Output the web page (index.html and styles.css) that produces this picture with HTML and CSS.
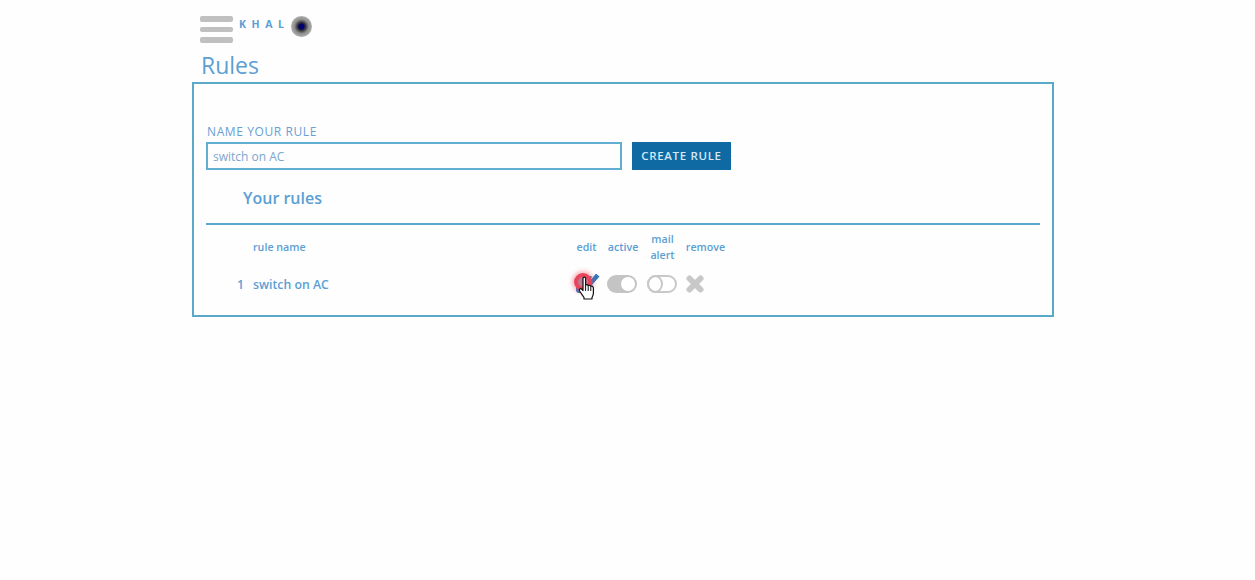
FILE: index.html
```html
<!DOCTYPE html>
<html>
<head>
    <link rel="stylesheet" href="styles.css">
</head>
<body>
    <div class="wrapper">
        <!-- Top bar -->
        <div class="topbar">
            <div class="burger"><span></span><span></span><span></span></div>
            <div class="brand">KHAL</div>
            <div class="eye"></div>
        </div>
        <h1 class="title">Rules</h1>
        <!-- Rules panel -->
        <div class="panel">
            <label class="name-label">NAME YOUR RULE</label>
            <div class="create-row">
                <div class="name-input">switch on AC</div>
                <button class="create-btn">CREATE RULE</button>
            </div>
            <h2 class="subtitle">Your rules</h2>
            <div class="rules-head">
                <div></div>
                <div class="col-name">rule name</div>
                <div class="col">edit</div>
                <div class="col">active</div>
                <div class="col">mail<br>alert</div>
                <div class="col">remove</div>
            </div>
            <div class="rule-row">
                <div class="num">1</div>
                <div class="col-name">switch on AC</div>
                <div class="edit-cell">
                    <svg class="pencil" width="28" height="28" viewBox="0 0 28 28">
                        <rect x="3" y="7" width="17" height="17" rx="3" fill="#3b7fc0"/>
                        <path d="M12 17 L23 4 L27 7.5 L16 20 L11.5 21.5 Z" fill="#2f78bd" stroke="#fff" stroke-width="1"/>
                    </svg>
                    <div class="click-glow"></div>
                    <svg class="hand" width="18" height="24" viewBox="0 0 18 24">
                        <path d="M5 2.2 C5 .7 7.6 .7 7.6 2.2 L7.6 9 C8.6 8.4 9.8 8.6 10.2 9.5 C11.2 9 12.4 9.3 12.8 10.3 C14 9.9 15.4 10.6 15.4 12 L15.4 17 C15.4 19 14.6 20 14 21.5 L14 23 L6 23 L6 21.5 C4.5 19.5 3.4 17.5 1.6 15 C.6 13.4 2.4 12 3.8 13.2 L5 14.6 Z" fill="#fff" stroke="#111" stroke-width="1.2" stroke-linejoin="round"/>
                        <path d="M7.6 9 L7.6 15 M10.2 9.5 L10.2 15 M12.8 10.3 L12.8 15" stroke="#111" stroke-width="1" fill="none"/>
                    </svg>
                </div>
                <div class="toggle-cell"><div class="toggle on"><span></span></div></div>
                <div class="toggle-cell"><div class="toggle off"><span></span></div></div>
                <div class="remove-cell">
                    <svg width="20" height="20" viewBox="0 0 20 20">
                        <path d="M4.5 4.5 L15.5 15.5 M15.5 4.5 L4.5 15.5" stroke="#c8c8c8" stroke-width="6" stroke-linecap="round"/>
                    </svg>
                </div>
            </div>
        </div>
    </div>
</body>
</html>
```

FILE: styles.css
```css
body {
    margin: 0;
    background: #fefefe;
    font-family: "Open Sans", sans-serif;
    color: #5b9fd4;
}
.wrapper {
    width: 862px;
    margin-left: 192px;
    padding-top: 15px;
}
/* Top bar */
.topbar {
    display: flex;
    align-items: flex-start;
    height: 29px;
    padding-left: 8px;
}
.burger {
    width: 33px;
    display: flex;
    flex-direction: column;
    gap: 5px;
    padding-top: 1px;
}
.burger span {
    display: block;
    height: 5.5px;
    background: #c0c0c0;
    border-radius: 2px;
}
.brand {
    margin-left: 6px;
    width: 52px;
    font-size: 10.5px;
    font-weight: 700;
    letter-spacing: 5.6px;
    line-height: 18px;
}
.eye {
    width: 21px;
    height: 21px;
    margin-top: 1px;
    border-radius: 50%;
    background: radial-gradient(circle, #00007a 0, #00006a 16%, #3a3a3a 28%, #8f8f8f 48%, #b5b5b5 75%, #e8e8e8 100%);
}
.title {
    margin: 4px 0 0 9px;
    font-size: 23px;
    font-weight: 400;
    line-height: 34px;
    color: #5b9fd4;
}
/* Panel */
.panel {
    box-sizing: border-box;
    height: 235px;
    border: 2px solid #5aa9c9;
    padding: 39px 12px 0 12px;
}
.name-label {
    display: block;
    margin-left: 1px;
    font-size: 12px;
    line-height: 17px;
    letter-spacing: 0.6px;
    color: #6a9fd2;
}
.create-row {
    display: flex;
    gap: 10px;
    margin-top: 2px;
}
.name-input {
    box-sizing: border-box;
    width: 416px;
    height: 28px;
    border: 2px solid #62aed2;
    padding-left: 5px;
    font-size: 12px;
    line-height: 25px;
    color: #7ba6cf;
}
.create-btn {
    width: 99px;
    height: 28px;
    border: none;
    padding: 0 0 1px;
    background: #0f69a3;
    color: #d5e8f4;
    font-family: inherit;
    font-size: 11.5px;
    font-weight: 600;
    letter-spacing: 0.65px;
}
.subtitle {
    box-sizing: border-box;
    height: 55px;
    margin: 0;
    padding: 17px 0 0 37px;
    border-bottom: 2px solid #5aa9c9;
    font-size: 16px;
    font-weight: 600;
    line-height: 22px;
    color: #5b9fd4;
}
/* Rule table */
.rules-head, .rule-row {
    display: grid;
    grid-template-columns: 38px 328px 29px 44px 35px 51px;
    align-items: center;
    font-size: 10.7px;
    font-weight: 600;
}
.rules-head {
    height: 43px;
    line-height: 16px;
}
.rules-head .col {
    text-align: center;
}
.col-name {
    padding-left: 9px;
}
.rule-row {
    height: 32px;
    font-size: 12.3px;
}
.num {
    text-align: right;
}
.edit-cell {
    position: relative;
    height: 28px;
}
.pencil {
    position: absolute;
    left: 1px;
    top: -1px;
}
.click-glow {
    position: absolute;
    left: 2px;
    top: 3px;
    width: 18px;
    height: 18px;
    border-radius: 50%;
    box-sizing: border-box;
    border: 4px solid #e8445a;
    background: #c07a95;
    box-shadow: 0 0 4px 2px rgba(240, 70, 90, 0.4);
}
.hand {
    position: absolute;
    left: 6px;
    top: 6px;
}
.toggle-cell {
    display: flex;
    justify-content: center;
    padding-right: 2px;
}
.toggle {
    box-sizing: border-box;
    width: 30px;
    height: 18px;
    border-radius: 9px;
    display: flex;
    align-items: center;
}
.toggle span {
    display: block;
    border-radius: 50%;
}
.toggle.on {
    background: #c4c4c4;
    justify-content: flex-end;
    padding-right: 2px;
}
.toggle.on span {
    width: 14px;
    height: 14px;
    background: #fff;
}
.toggle.off {
    border: 2px solid #c8c8c8;
    background: #fff;
}
.toggle.off span {
    box-sizing: border-box;
    width: 16px;
    height: 18px;
    margin-left: -2px;
    border: 2px solid #c8c8c8;
}
.remove-cell {
    padding-left: 5px;
    display: flex;
}
```
